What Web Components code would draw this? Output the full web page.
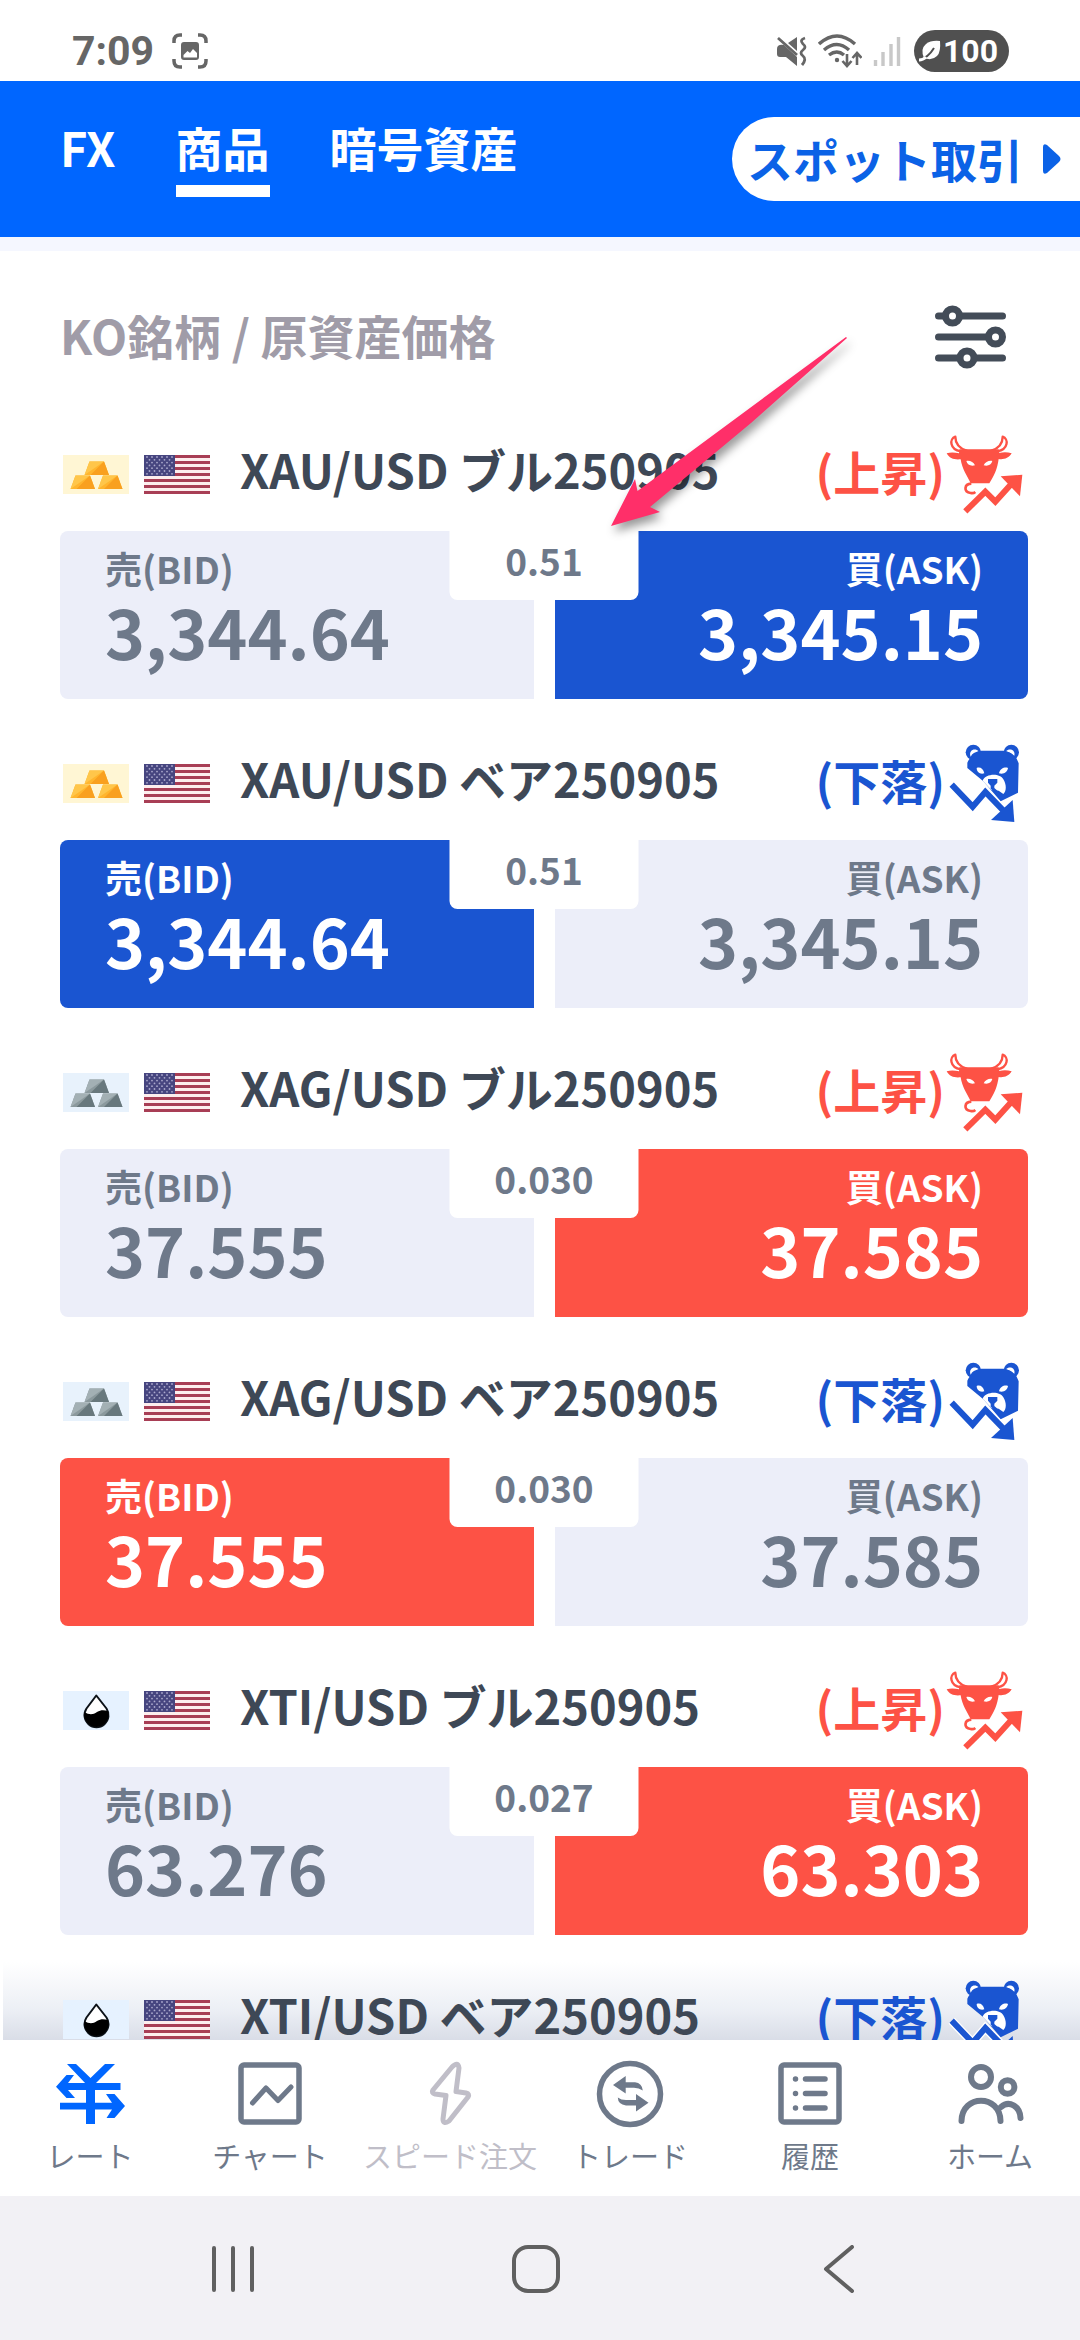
<!DOCTYPE html>
<html lang="ja">
<head>
<meta charset="utf-8">
<meta name="viewport" content="width=device-width, initial-scale=1">
<title>レート</title>
<style>
  html, body { margin: 0; }
  body {
    --brand: #0066ff;
    --up: #fd5245;
    --down: #1a55d1;
    --ink: #3e4856;
    --muted: #6e798a;
    --cell: #eceef9;
    font-family: "Noto Sans CJK JP", "Noto Sans", sans-serif;
    background: #fff;
    color: var(--ink);
  }
</style>
</head>
<body>
<app-screen></app-screen>

<script>
const BASE = `
  *, *::before { box-sizing: border-box; }
  button { font: inherit; color: inherit; background: none; border: 0; margin: 0; padding: 0; text-align: inherit; }
  svg { display: block; flex: none; }
`;

function define(name, render) {
  customElements.define(name, class extends HTMLElement {
    connectedCallback() {
      if (this.shadowRoot) return;
      const tpl = document.createElement('template');
      const { css, html } = render(this);
      tpl.innerHTML = `<style>${BASE}${css}</style>${html}`;
      this.attachShadow({ mode: 'open' }).append(tpl.content.cloneNode(true));
    }
  });
}

/* ---------- pictures ---------- */
const ingots = (bg, light, mid, dark) => {
  const bar = (x, y) => `<g transform="translate(${x} ${y})"><path d="M5 0H19.500L24.500 13.500H0Z" fill="${mid}"/><path d="M5 0H19.500L0 13.500Z" fill="${light}"/><path d="M19.500 0L24.500 13.500H6Z" fill="${dark}"/></g>`;
  return `<svg width="66" height="39" viewBox="0 0 66 39"><rect width="66" height="39" fill="${bg}"/>${bar(21.5, 6.500)}${bar(7.5, 20.500)}${bar(35, 20.500)}</svg>`;
};
const flag = (() => {
  let s = '';
  for (let i = 0; i < 13; i += 2) s += `<rect y="${i * 3}" width="66" height="3" fill="#a83e55"/>`;
  s += '<rect width="31" height="21" fill="#46457f"/>';
  for (let r = 0; r < 7; r++)
    for (let c = 0; c < (r % 2 ? 5 : 6); c++)
      s += `<circle cx="${3 + c * 5 + (r % 2 ? 2.5 : 0)}" cy="${2 + r * 2.8}" r=".9" fill="#aaa8cc"/>`;
  return `<svg width="66" height="39" viewBox="0 0 66 39"><rect width="66" height="39" fill="#fdeeee"/>${s}</svg>`;
})();
const commodity = {
  gold: ingots('#fff6d4', '#ffc64a', '#ffb52e', '#f9a01f'),
  silver: ingots('#e8f2fc', '#a3b0b4', '#8b999d', '#68787d'),
  oil: `<svg width="66" height="39" viewBox="0 0 66 39"><rect width="66" height="39" fill="#e6f2ff"/>
    <path d="M33.300 4.500L23.500 17.500A12 12 0 1 0 43.500 17.500Z" fill="#fff" stroke="#0c1218" stroke-width="2" stroke-linejoin="round"/>
    <path d="M21.500 21C26 24 30 24 34 21C38 18.500 41 19 45 20A12.200 12.200 0 1 1 21.500 21Z" fill="#000"/></svg>`
};
const animal = {
  bull: `<svg width="78" height="80" viewBox="75 40 234 240">
    <g fill="none" stroke="currentColor" stroke-width="7" stroke-linejoin="round">
      <path d="M106 48C88 54 88 86 122 92L140 90C122 84 106 70 106 48Z"/>
      <path d="M248 48C266 54 266 86 232 92L214 90C232 84 248 70 248 48Z"/></g>
    <path d="M118 86H236L238 97C250 94 262 94 275 98C266 114 250 117 236 115C232 145 222 166 208 188H152C142 166 126 145 122 116C104 118 88 114 80 98C92 94 104 95 117 98Z" fill="currentColor"/>
    <path d="M139 121C150 119 160 124 165 134C152 137 142 133 139 121ZM217 121C206 119 196 124 191 134C204 137 214 133 217 121Z" fill="#fff"/>
    <path d="M154 189C132 190 130 214 152 217Q160 219 166 214" fill="none" stroke="currentColor" stroke-width="8"/>
    <path d="M166 242L196 213L226 243L272 192" fill="none" stroke="#fff" stroke-width="28"/>
    <path d="M136 272L196 213L226 243L276 188" fill="none" stroke="currentColor" stroke-width="18"/>
    <path d="M242 167L307 162L300 227Z" fill="currentColor"/></svg>`,
  bear: `<svg width="78" height="80" viewBox="75 37 234 240">
    <circle cx="160" cy="65" r="23" fill="currentColor"/><circle cx="274" cy="65" r="23" fill="currentColor"/>
    <path d="M152 78C144 58 166 50 176 62C166 64 156 68 152 78ZM282 78C290 58 268 50 258 62C268 64 278 68 282 78Z" fill="#fff"/>
    <path d="M180 60H254C270 66 284 72 290 84L296 98L294 186L242 212L190 152L142 112V96C150 78 164 66 180 60Z" fill="currentColor"/>
    <path d="M170 112C180 108 190 114 193 128C180 132 170 124 170 112ZM264 112C254 108 240 114 237 128C252 132 262 124 264 112Z" fill="#fff"/>
    <path d="M188 150C196 128 240 126 250 146C260 162 260 182 250 190L236 180L214 178Z" fill="#fff"/>
    <path d="M204 145H232V156L223 165V172L246 192L239 198L212 174V165L204 156Z" fill="currentColor"/>
    <path d="M95 162L158 228L196 184L262 252" fill="none" stroke="#fff" stroke-width="26"/>
    <path d="M95 162L158 228L196 184L256 246" fill="none" stroke="currentColor" stroke-width="18"/>
    <path d="M213 268L283 274L278 208Z" fill="currentColor"/></svg>`
};
const tabIcon = {
  rate: `<g fill="currentColor"><path d="M13 6H22L36.500 20L51 6H61L41 26V66H32V26Z"/>
    <path d="M2 28.700L12.500 17H20L14 25H66.500V32H14L21 40H12.500Z"/>
    <path d="M71 48L60.500 36H52L58 44.700H6V51.400H58L52.500 60H60.500Z"/></g>`,
  chart: `<g fill="none" stroke="currentColor" stroke-width="5.500"><rect x="7" y="7" width="58" height="57" rx="3"/>
    <path d="M18.500 45L32 30L44 42.500L57 29" stroke-width="5" stroke-linecap="round" stroke-linejoin="round"/></g>`,
  speed: `<path d="M38 9Q44 3 45 10L42 33.500L52 35Q56 36 54 39L35 63Q29 67 29 61L32 37.500L21 36Q17 35 19 32Z" fill="none" stroke="currentColor" stroke-width="5" stroke-linejoin="round"/>`,
  trade: `<circle cx="36" cy="36" r="30.500" fill="none" stroke="currentColor" stroke-width="5.500"/>
    <g fill="currentColor"><path d="M19 27L31.700 18V24.300H41Q48 25 48.800 32.500Q45 29.700 40 29.700H31.700V35.500Z"/>
    <path d="M54.500 44.700L42 36V42H32Q27 42 23.800 39.500Q24 46.500 32 47.400H42V53.500Z"/></g>`,
  history: `<g fill="none" stroke="currentColor" stroke-width="5.500"><rect x="7" y="7" width="58" height="57" rx="3"/>
    <path d="M31.500 21H51M31.500 35.500H51M31.500 50H51M21.500 21h.01M21.500 35.500h.01M21.500 50h.01" stroke-linecap="round"/></g>`,
  home: `<g fill="none" stroke="currentColor" stroke-width="6" stroke-linecap="round"><circle cx="27" cy="19" r="10"/><circle cx="53.600" cy="29" r="6.800"/>
    <path d="M7.500 63C8 36 46 36 46.500 63M47 49C55 42 66 48 66.500 60"/></g>`
};

/* ---------- phone status bar ---------- */
define('status-bar', () => ({
  css: `
    :host { display: flex; align-items: center; justify-content: space-between; height: 81px; padding: 21px 71px 0 72px; color: #666; font-family: Roboto, sans-serif; font-weight: 700; }
    div { display: flex; align-items: center; }
    .left { gap: 18px; font-size: 41px; line-height: 44px; }
    .right { gap: 10px; }
    .battery { gap: 2px; height: 42px; width: 95px; padding-left: 5px; border-radius: 21px; background: #505050; color: #fff; font-size: 32px; line-height: 42px; }
  `,
  html: `
    <div class="left"><span>7:09</span>
      <svg width="36" height="36" viewBox="0 0 36 36"><path d="M2 10V8Q2 2 8 2H10M26 2H28Q34 2 34 8V10M34 26V28Q34 34 28 34H26M10 34H8Q2 34 2 28V26" fill="none" stroke="currentColor" stroke-width="3.500"/><path d="M12 9H24Q27 9 27 12V24Q27 27 24 27H12Q9 27 9 24V12Q9 9 12 9ZM11.500 24.500H25V20L21 16L18 20L15.500 18L11.500 22Z" fill="currentColor" fill-rule="evenodd"/></svg>
    </div>
    <div class="right">
      <svg width="32" height="32" viewBox="0 0 32 32"><path d="M1 14Q1 9 8 10L21 22V31L10 22H4Q1 22 1 19ZM12 8L21 2V16Z" fill="currentColor"/><path d="M2 3L21 20M29 3Q23 5 27 9Q31 12 27 15Q23 18 27 21Q31 24 26 30" fill="none" stroke="currentColor" stroke-width="2.800"/></svg>
      <svg width="44" height="36" viewBox="0 0 44 36"><g fill="none" stroke="currentColor" stroke-width="3.400"><path d="M1 11Q19 -5 37 11M6 17Q19 6 31 17M11 22Q19 16 26 22"/><path d="M29 21V33M24.500 28L29 33L33.500 28M39 32V20M34.500 25L39 20L43.500 25" stroke-width="2.600"/></g><circle cx="19" cy="27" r="2.200" fill="currentColor"/></svg>
      <svg width="32" height="32" viewBox="0 0 32 32"><path d="M3.500 25V31M11 17V31M19 9V31M26.500 2V31" stroke="#c8c8c8" stroke-width="3.400"/></svg>
      <div class="battery">
        <svg width="22" height="22" viewBox="0 0 22 22"><path d="M21 1Q22 12 18 16Q13 21 5 18Q1 9 7 4Q12 0 21 1Z" fill="#fff"/><path d="M0 20Q9 18 15 8" fill="none" stroke="#505050" stroke-width="2"/><path d="M0 20Q4 20 7 17" fill="none" stroke="#fff" stroke-width="3"/></svg>
        <span>100</span>
      </div>
    </div>`
}));

/* ---------- blue category header ---------- */
define('category-header', () => ({
  css: `
    :host { display: flex; justify-content: space-between; align-items: flex-start; height: 156px; padding: 36px 0 0 60px; background: var(--brand); color: #fff; font-size: 47px; font-weight: 700; line-height: 60px; box-shadow: 0 14px 0 #f5f7ff; }
    nav { display: flex; gap: 60px; }
    nav button { padding-bottom: 8px; border-bottom: 12px solid transparent; }
    nav button[aria-current] { border-color: #fff; }
    .spot { display: flex; align-items: center; gap: 20px; height: 84px; padding: 0 19px 0 15px; border-radius: 42px 0 0 42px; background: #fff; color: #0b62e6; font-size: 46px; }
    .spot span { padding-bottom: 2px; }
  `,
  html: `
    <nav><button>FX</button><button aria-current="page">商品</button><button>暗号資産</button></nav>
    <button class="spot"><span>スポット取引</span>
      <svg width="18" height="30" viewBox="0 0 18 30"><path d="M0 3Q0 -1 4 1L16 12Q19 15 16 18L4 29Q0 31 0 27Z" fill="currentColor"/></svg>
    </button>`
}));

/* ---------- list heading ---------- */
define('list-heading', () => ({
  css: `
    :host { display: flex; align-items: center; justify-content: space-between; height: 199px; padding: 0 22px 0 0; }
    h1 { margin: 0; padding-bottom: 4px; font-size: 47px; line-height: 60px; font-weight: 700; color: #a09ca8; }
  `,
  html: `
    <h1><slot></slot></h1>
    <button aria-label="表示設定"><svg width="71" height="64" viewBox="0 0 71 64"><g fill="none" stroke="#434c58" stroke-width="7" stroke-linecap="round"><path d="M3.500 11H9M26 11H67.500M3.500 32H51M3.500 53H23M41 53H67.500"/><g fill="#fff"><circle cx="17.500" cy="11" r="7"/><circle cx="60.500" cy="32" r="7"/><circle cx="32" cy="53" r="7"/></g></g></svg></button>`
}));

/* ---------- one instrument ---------- */
define('rate-row', el => {
  const { kind, side, name, bid, ask, spread, tone } = el.dataset;
  const bull = side === 'bull';
  return {
    css: `
      :host { display: block; margin-bottom: 46px; }
      header { display: flex; align-items: center; height: 76px; margin-bottom: 19px; padding: 0 5px 0 3px; }
      .pair { display: flex; gap: 15px; margin-right: 30px; }
      h2 { flex: 1; margin: 0; padding-bottom: 10px; font-size: 47px; line-height: 60px; font-weight: 700; white-space: nowrap; }
      .trend { display: flex; align-items: center; font-size: 47px; line-height: 60px; font-weight: 700; color: var(--${bull ? 'up' : 'down'}); }
      .trend span { padding-bottom: 6px; }
      .quote { position: relative; display: grid; grid-template-columns: 1fr 1fr; gap: 21px; }
      .cell { display: block; padding: 17px 45px 25px; background: var(--cell); color: var(--muted); border-radius: 8px 0 0 8px; }
      .ask { text-align: right; border-radius: 0 8px 8px 0; }
      .hot { background: var(--${tone}); color: #fff; }
      .cell span { display: block; font-size: 37px; line-height: 40px; font-weight: 700; }
      .cell strong { display: block; font-size: 68px; line-height: 86px; font-weight: 700; }
      .spread { position: absolute; top: 0; left: 50%; transform: translateX(-50%); width: 189px; height: 69px; border-radius: 0 0 8px 8px; background: #fff; color: var(--muted); font-size: 37px; line-height: 58px; font-weight: 700; text-align: center; }
    `,
    html: `
      <header>
        <div class="pair">${commodity[kind]}${flag}</div>
        <h2>${name}</h2>
        <div class="trend"><span>${bull ? '(上昇)' : '(下落)'}</span>${animal[side]}</div>
      </header>
      ${bid ? `<div class="quote">
        <button class="cell bid ${bull ? '' : 'hot'}"><span>売(BID)</span><strong>${bid}</strong></button>
        <button class="cell ask ${bull ? 'hot' : ''}"><span>買(ASK)</span><strong>${ask}</strong></button>
        <div class="spread">${spread}</div>
      </div>` : ''}`
  };
});

/* ---------- app tab bar ---------- */
define('tab-item', el => ({
  css: `
    :host { display: block; color: var(--muted); }
    button { display: flex; flex-direction: column; align-items: center; gap: 9px; width: 100%; }
    svg { color: ${el.hasAttribute('active') ? 'var(--brand)' : 'inherit'}; }
    button:disabled { color: #c0bec8; }
    span { font-size: 29px; line-height: 32px; font-weight: 400; white-space: nowrap; }
  `,
  html: `<button ${el.hasAttribute('disabled') ? 'disabled' : ''}><svg width="72" height="72" viewBox="0 0 72 72">${tabIcon[el.getAttribute('icon')]}</svg><span><slot></slot></span></button>`
}));
define('tab-bar', () => ({
  css: `:host { display: grid; grid-template-columns: repeat(6, 1fr); height: 156px; padding-top: 18px; background: #fff; }`,
  html: `<slot></slot>`
}));

/* ---------- system navigation ---------- */
define('system-nav', () => ({
  css: `
    :host { display: grid; grid-template-columns: repeat(3, 1fr); align-items: center; justify-items: center; height: 144px; padding: 2px 90px 0 82px; background: #f2f1f5; color: #606060; }
    svg { fill: none; stroke: currentColor; stroke-width: 4; stroke-linecap: round; stroke-linejoin: round; }
  `,
  html: `
    <button aria-label="履歴"><svg width="48" height="48" viewBox="0 0 48 48"><path d="M5 3V45M24 3V45M43 3V45"/></svg></button>
    <button aria-label="ホーム"><svg width="50" height="48" viewBox="0 0 50 48"><rect x="3" y="2" width="44" height="44" rx="14"/></svg></button>
    <button aria-label="戻る"><svg width="32" height="48" viewBox="0 0 32 48"><path d="M29 2L3 24L29 46"/></svg></button>`
}));

/* ---------- hand-drawn pointer that lies over the list ---------- */
define('pointer-arrow', () => ({
  css: `
    :host { position: absolute; top: 327px; left: 601px; pointer-events: none; }
    svg { filter: drop-shadow(3px 6px 5px rgba(0, 0, 0, .4)); }
  `,
  html: `<svg width="256" height="210" viewBox="0 0 256 210"><path d="M245 10L36.500 164L34 152L10 199L59 185L49 180L150 96L246 11Z" fill="#ff2f69"/></svg>`
}));

/* ---------- screen ---------- */
const rows = [
  ['gold', 'bull', 'XAU/USD ブル250905', '3,344.64', '3,345.15', '0.51', 'down'],
  ['gold', 'bear', 'XAU/USD ベア250905', '3,344.64', '3,345.15', '0.51', 'down'],
  ['silver', 'bull', 'XAG/USD ブル250905', '37.555', '37.585', '0.030', 'up'],
  ['silver', 'bear', 'XAG/USD ベア250905', '37.555', '37.585', '0.030', 'up'],
  ['oil', 'bull', 'XTI/USD ブル250905', '63.276', '63.303', '0.027', 'up'],
  ['oil', 'bear', 'XTI/USD ベア250905', '', '', '', 'up']
];
define('app-screen', () => ({
  css: `
    :host { position: relative; display: flex; flex-direction: column; height: 100vh; overflow: hidden; }
    status-bar, category-header, tab-bar, system-nav { flex: none; }
    main { flex: 1; min-height: 0; overflow: hidden; padding: 0 52px 0 60px; background: linear-gradient(to top, #d9dde7, #eceff5 30px, rgba(255, 255, 255, 0) 78px) 3px 100% / 100% 78px no-repeat; }
  `,
  html: `
    <status-bar></status-bar>
    <category-header></category-header>
    <main>
      <list-heading>KO銘柄 / 原資産価格</list-heading>
      ${rows.map(([k, s, n, b, a, sp, t]) => `<rate-row data-kind="${k}" data-side="${s}" data-name="${n}" data-bid="${b}" data-ask="${a}" data-spread="${sp}" data-tone="${t}"></rate-row>`).join('')}
    </main>
    <tab-bar>
      <tab-item icon="rate" active>レート</tab-item>
      <tab-item icon="chart">チャート</tab-item>
      <tab-item icon="speed" disabled>スピード注文</tab-item>
      <tab-item icon="trade">トレード</tab-item>
      <tab-item icon="history">履歴</tab-item>
      <tab-item icon="home">ホーム</tab-item>
    </tab-bar>
    <system-nav></system-nav>
    <pointer-arrow></pointer-arrow>`
}));
</script>
</body>
</html>
